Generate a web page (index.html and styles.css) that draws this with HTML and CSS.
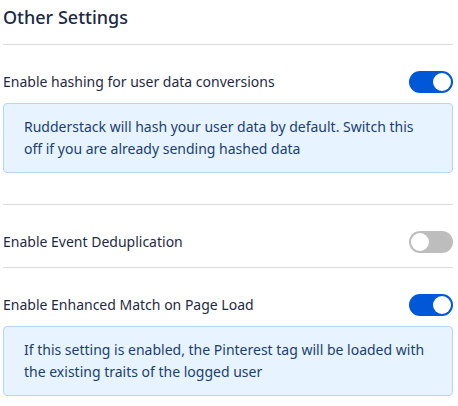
FILE: index.html
```html
<!DOCTYPE html>
<html>
<head>
<meta charset="utf-8">
<link rel="stylesheet" href="styles.css">
</head>
<body>
<div class="panel">
  <h2 class="title">Other Settings</h2>
  <section class="setting first">
    <div class="row">
      <span class="label">Enable hashing for user data conversions</span>
      <span class="toggle on"><span class="knob"></span></span>
    </div>
    <div class="info">Rudderstack will hash your user data by default. Switch this off if you are already sending hashed data</div>
  </section>
  <section class="setting">
    <div class="row">
      <span class="label">Enable Event Deduplication</span>
      <span class="toggle"><span class="knob"></span></span>
    </div>
  </section>
  <section class="setting">
    <div class="row">
      <span class="label">Enable Enhanced Match on Page Load</span>
      <span class="toggle on"><span class="knob"></span></span>
    </div>
    <div class="info">If this setting is enabled, the Pinterest tag will be loaded with the existing traits of the logged user</div>
  </section>
</div>
</body>
</html>
```
FILE: styles.css
```css
* { box-sizing: border-box; }
html, body { margin: 0; padding: 0; background: #fff; }
body {
  font-family: "Noto Sans", "Open Sans", sans-serif;
  color: #1e2a44;
}
.panel {
  width: 450px;
  margin-left: 3px;
}
.title {
  margin: 0;
  padding-top: 4px;
  height: 45px;
  font-size: 18px;
  font-weight: 500;
  line-height: 26px;
  color: #1b2946;
  border-bottom: 1px solid #dcdcdc;
}
.setting {
  padding-top: 26px;
  padding-bottom: 14px;
  border-bottom: 1px solid #dcdcdc;
}
.setting.first { padding-bottom: 31px; }
.setting:last-child { border-bottom: none; }
.row {
  display: flex;
  align-items: center;
  justify-content: space-between;
  height: 22px;
}
.label {
  font-size: 14px;
  line-height: 22px;
}
.toggle {
  position: relative;
  width: 44px;
  height: 22px;
  border-radius: 11px;
  background: #bdbdbd;
  flex: none;
}
.toggle .knob {
  position: absolute;
  top: 2px;
  left: 2px;
  width: 18px;
  height: 18px;
  border-radius: 50%;
  background: #fff;
}
.toggle.on { background: #0057d8; }
.toggle.on .knob { left: 24px; }
.info {
  margin-top: 10px;
  padding: 12px 20px;
  background: #e7f3fe;
  border: 1px solid #b6d6f6;
  border-radius: 4px;
  font-size: 14px;
  line-height: 22px;
  color: #1a3f73;
}
```
